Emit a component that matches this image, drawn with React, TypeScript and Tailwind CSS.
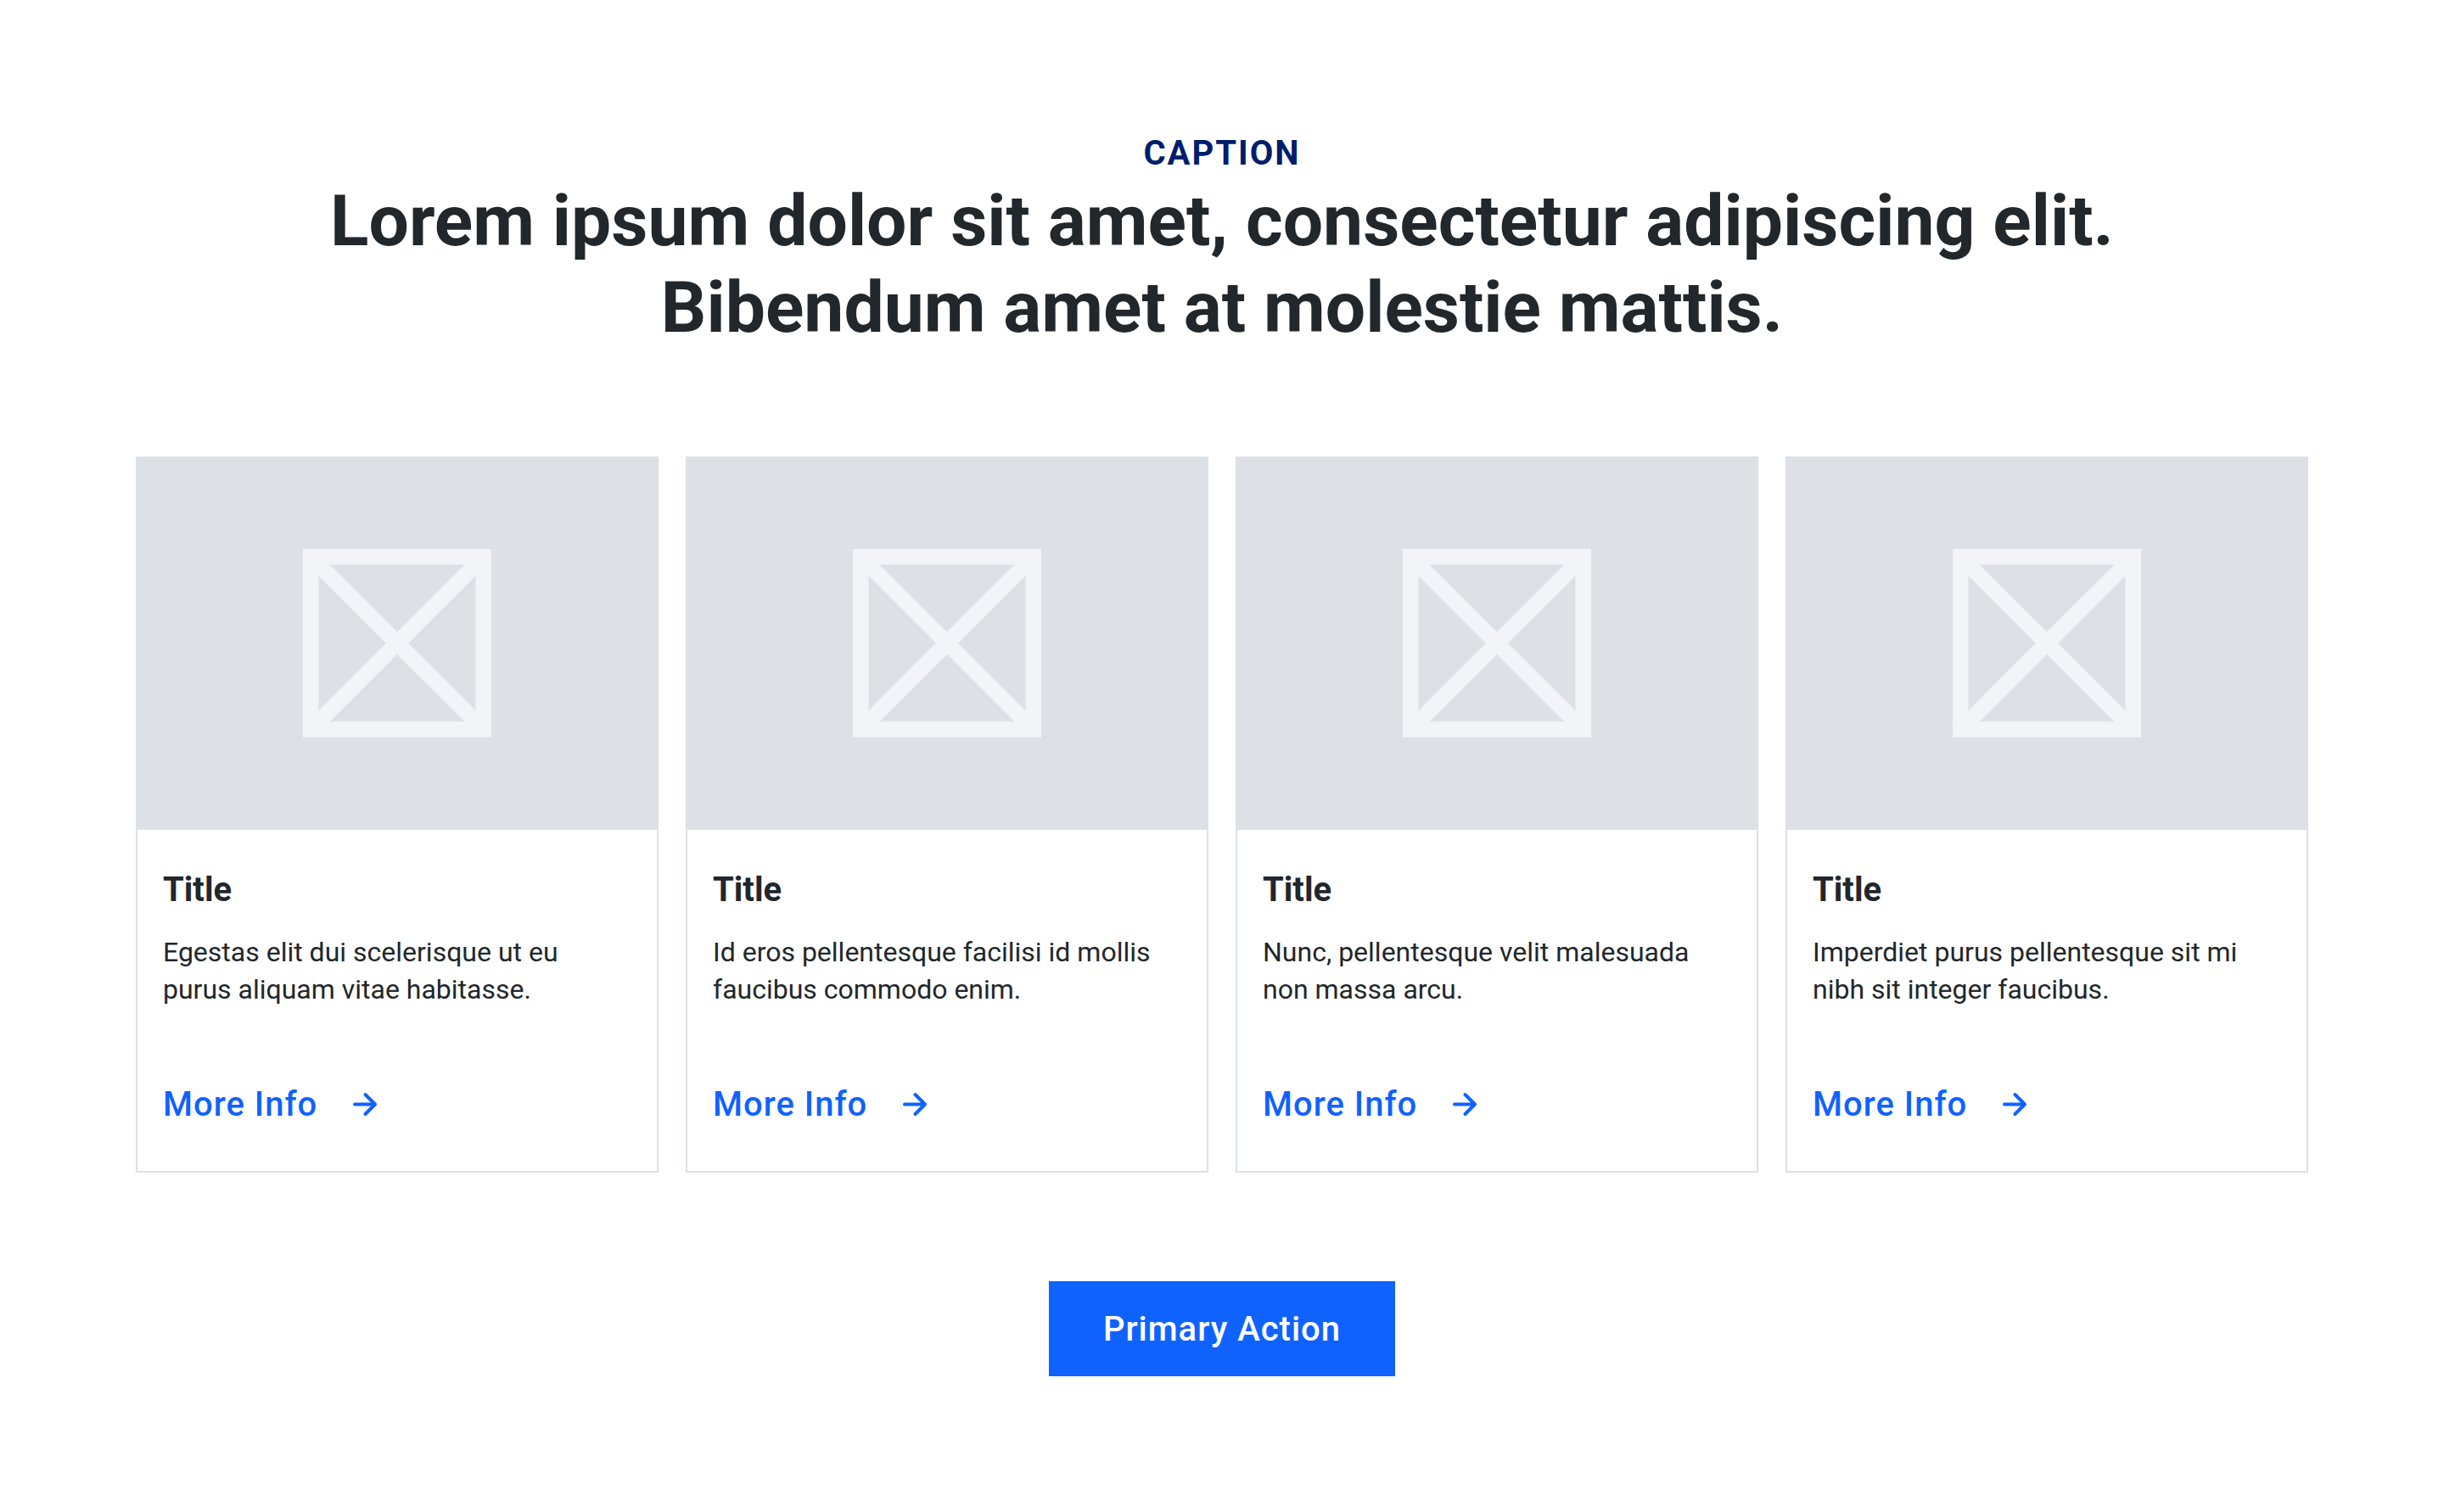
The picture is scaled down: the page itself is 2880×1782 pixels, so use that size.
const cards = [
  { title: "Title", text: "Egestas elit dui scelerisque ut eu purus aliquam vitae habitasse." },
  { title: "Title", text: "Id eros pellentesque facilisi id mollis faucibus commodo enim." },
  { title: "Title", text: "Nunc, pellentesque velit malesuada non massa arcu." },
  { title: "Title", text: "Imperdiet purus pellentesque sit mi nibh sit integer faucibus." },
];

function PlaceholderIcon() {
  return (
    <svg viewBox="0 0 222 222" className="size-[222px]" fill="none" stroke="#F2F4F8" strokeWidth="18.5" aria-hidden="true">
      <path d="M9.25 9.25h203.5v203.5H9.25z" />
      <path d="M9.25 9.25l203.5 203.5M212.75 9.25L9.25 212.75" />
    </svg>
  );
}

function ArrowIcon() {
  return (
    <svg viewBox="0 0 48 48" className="size-12" fill="none" stroke="currentColor" strokeWidth="4" strokeLinecap="round" strokeLinejoin="round" aria-hidden="true">
      <path d="M12 23.5h23M24.5 12l11.5 11.5L24.5 35" />
    </svg>
  );
}

function Card({ title, text }: { title: string; text: string }) {
  return (
    <article className="flex flex-col border-x-2 border-b-2 border-[#DDE1E6] bg-white">
      <div className="flex h-[440px] items-center justify-center bg-[#DDE1E6]">
        <PlaceholderIcon />
      </div>
      <div className="flex flex-1 flex-col items-start px-[30px] pt-12 pb-[30px]">
        <h2 className="text-[40px] leading-[46px] font-bold">{title}</h2>
        <p className="mt-7 text-[32px] leading-[44px]">{text}</p>
        <div className="mt-auto pt-[66px]">
          <a href="#" className="flex h-24 items-center gap-8 text-[40px] leading-[42px] font-medium tracking-[1px] text-[#0F62FE]">
            More Info
            <ArrowIcon />
          </a>
        </div>
      </div>
    </article>
  );
}

export default function App() {
  return (
    <main className="flex min-h-screen flex-col bg-white p-40 font-['Roboto',sans-serif] text-[#21272A]">
      <header className="flex flex-col items-center gap-2 text-center">
        <p className="text-[40px] leading-[42px] font-bold tracking-[2px] text-[#001D6C] uppercase">Caption</p>
        <h1 className="text-[84px] leading-[102px] font-bold">
          Lorem ipsum dolor sit amet, consectetur adipiscing elit.
          <br />
          Bibendum amet at molestie mattis.
        </h1>
      </header>
      <section className="mt-[124px] grid grid-cols-4 gap-8">
        {cards.map((card) => (
          <Card key={card.text} {...card} />
        ))}
      </section>
      <button type="button" className="mt-32 h-28 self-center bg-[#0F62FE] px-16 pt-0.5 text-[40px] leading-[42px] font-medium tracking-[1px] text-white">
        Primary Action
      </button>
    </main>
  );
}
